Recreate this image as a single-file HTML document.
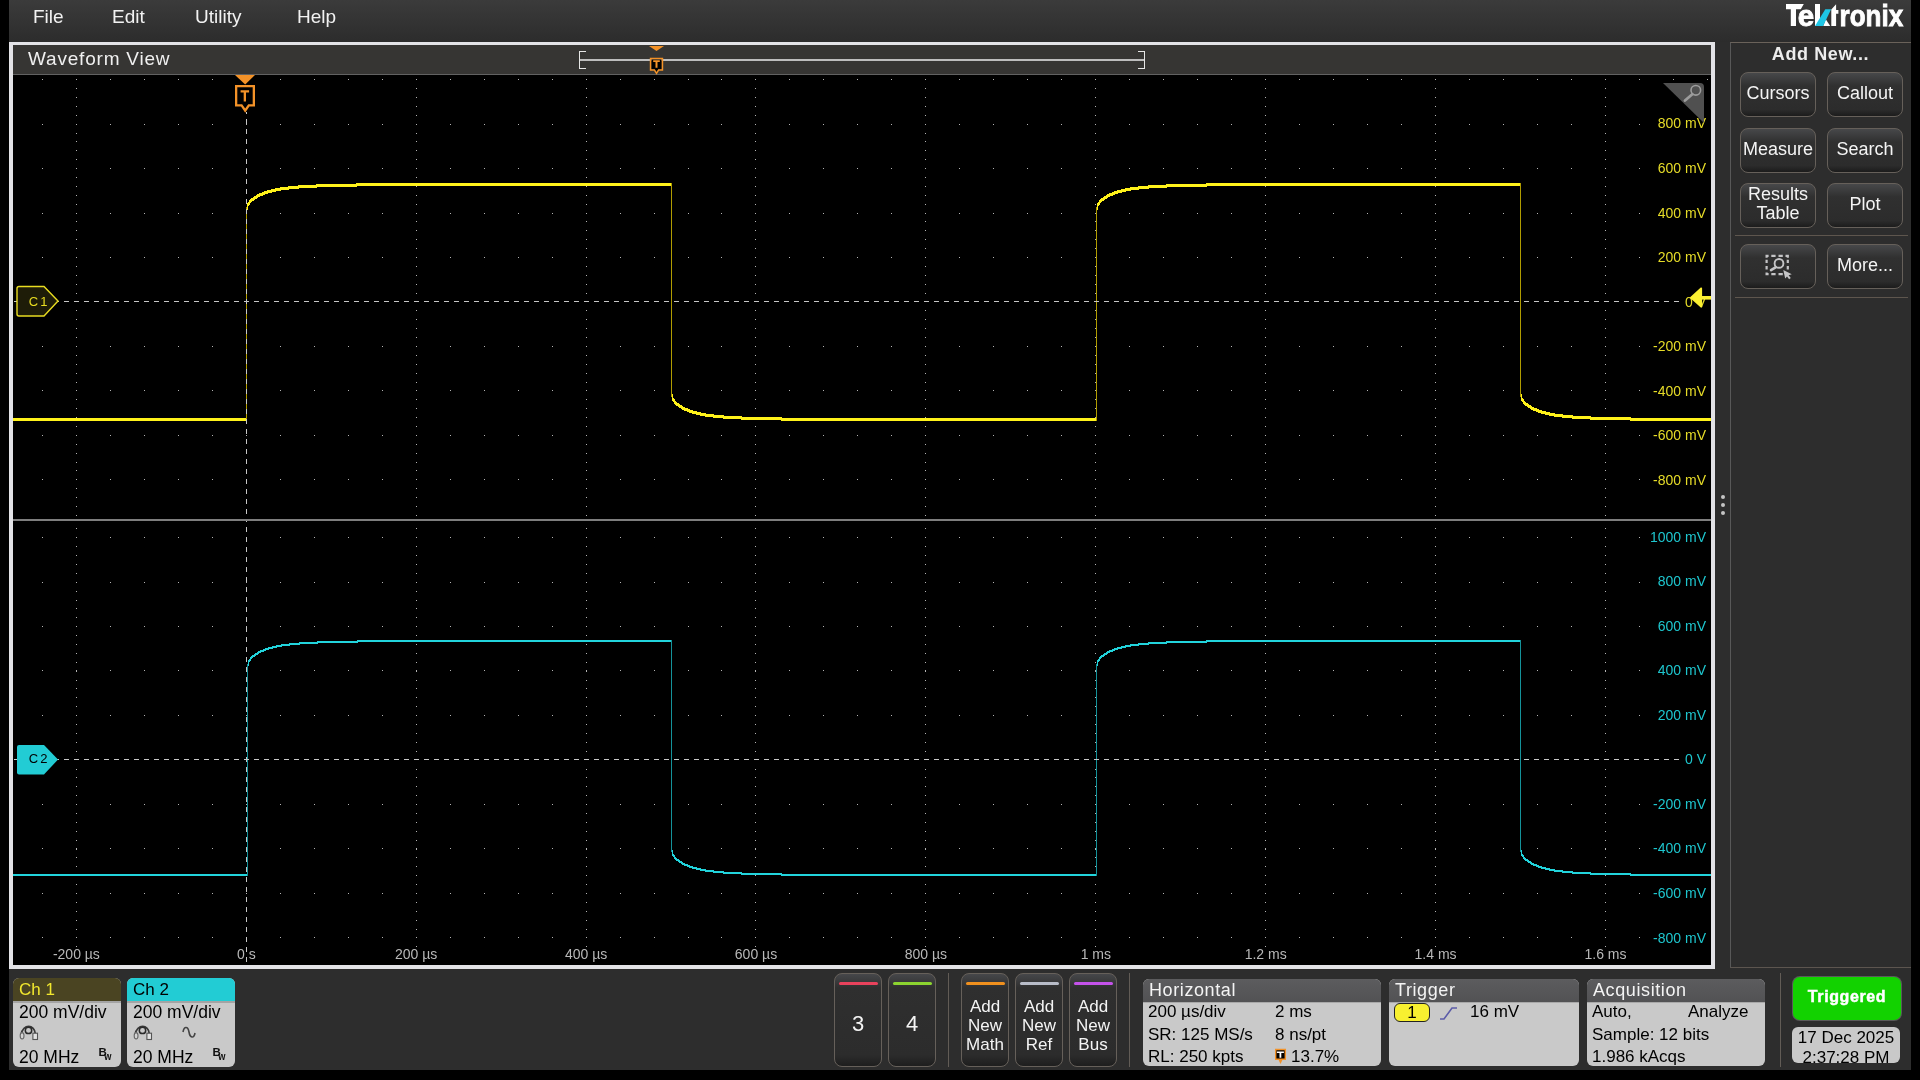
<!DOCTYPE html>
<html><head><meta charset="utf-8">
<style>
*{margin:0;padding:0;box-sizing:border-box}
html,body{width:1920px;height:1080px;overflow:hidden;background:#000;font-family:"Liberation Sans",sans-serif}body{will-change:transform}
.a{position:absolute}
#app{left:9px;top:0;width:1902px;height:1070px;background:#2d2d2d}
#menu{left:9px;top:0;width:1902px;height:42px;background:linear-gradient(#3b3b3b,#2c2c2c)}
.mi{position:absolute;top:6px;font-size:19px;line-height:19px;color:#f2f2f2;white-space:nowrap}
#frame{left:9px;top:42px;width:1706px;height:927px;background:#e3e3e7}
#title{left:13px;top:45px;width:1698px;height:29px;background:#363533}
#tline{left:13px;top:74px;width:1698px;height:1px;background:#626262}
#plot{left:13px;top:75px;width:1698px;height:890px;background:#000}
#sep{left:13px;top:519px;width:1698px;height:2px;background:#7e7e7e}
.vl{position:absolute;right:210px;padding-right:4px;padding-left:2px;background:#000;font-size:14px;line-height:18px;white-space:nowrap;text-align:right}
.c1l{color:#e6dc28}
.c2l{color:#1ec6ce}
.hl{position:absolute;top:947.5px;width:100px;text-align:center;font-size:14px;line-height:12px;color:#b8b8b8;white-space:nowrap}
#rpanel{left:1730px;top:42px;width:181px;height:926px;border-left:1px solid #585858;border-top:1px solid #6a625a;border-bottom:1px solid #5c554f}
.btn{position:absolute;width:76px;height:45px;border:1.5px solid #66605a;border-radius:8px;background:linear-gradient(#47484a,#303030 30%,#2c2c2c 85%,#1c1c1c);color:#f4f4f4;font-size:18px;line-height:19px;text-align:center;display:flex;align-items:center;justify-content:center;padding-bottom:2px}
.hsep{position:absolute;left:1735px;width:173px;height:1px;background:#5e564e}
.vsep{position:absolute;top:973px;width:1px;height:94px;background:#625c56}
.badge{position:absolute;top:978px;width:108px;height:89px;border-radius:6px;overflow:hidden;background:#c9c9c9}
.bh{position:absolute;left:0;top:0;width:100%;height:23px;font-size:17px;line-height:19px;padding-left:6px;padding-top:1.5px}
.bl{position:absolute;left:0;top:23px;width:100%;height:1.5px;background:#a4a4a4}
.bt{position:absolute;left:6px;font-size:17.5px;line-height:19px;color:#000;white-space:nowrap}
.sbtn{position:absolute;top:973px;width:48px;height:94px;border:1.5px solid #66605a;border-radius:8px;background:linear-gradient(#46474a,#2f2f2f 15%,#2c2c2c 88%,#1e1e1e);color:#f4f4f4;text-align:center}
.sbar{position:absolute;left:3.5px;top:7.5px;width:39px;height:3.2px;border-radius:2px}
.box{position:absolute;top:979px;height:87px;border-radius:6px;overflow:hidden;background:#c9c9c9}
.boxh{position:absolute;left:0;top:0;width:100%;height:23px;background:linear-gradient(#5c5c5e,#525254);color:#f4f4f4;font-size:18px;line-height:19px;padding-left:6px;padding-top:1.5px;letter-spacing:0.6px}
.boxl{position:absolute;left:0;top:23px;width:100%;height:1px;background:#a9a9a9}
.bx{position:absolute;font-size:17px;line-height:19px;color:#000;white-space:nowrap}
</style></head><body>
<div id="app" class="a"></div>
<div id="menu" class="a"></div>
<div class="mi" style="left:33px;top:6.5px">File</div>
<div class="mi" style="left:112px;top:6.5px">Edit</div>
<div class="mi" style="left:195px;top:6.5px">Utility</div>
<div class="mi" style="left:297px;top:6.5px">Help</div>
<!-- logo -->
<svg class="a" style="left:1780px;top:0" width="130" height="32" viewBox="1780 0 130 32">
<path d="M1786 4h17.8l-3 5.2h-4.8v16.8h-5.2v-16.8h-4.8z" fill="#fff"/>
<text x="1797.7" y="25.6" font-family="Liberation Sans" font-weight="bold" font-size="30" fill="#fff" stroke="#fff" stroke-width="0.9" textLength="16.4" lengthAdjust="spacingAndGlyphs">e</text>
<path d="M1815 4h5v22h-5z" fill="#fff"/>
<path d="M1823.2 26l2.6-6.8l4.4 6.8z" fill="#fff"/>
<path d="M1825.3 9.2h5.8l-8 16.8h-8.1z" fill="#1ec6e6"/>
<path d="M1831.3 9.6l4.8-5.4v5.8h2.3v3.7h-2.3v12.3h-4.8z" fill="#fff"/>
<text x="1839.6" y="25.6" font-family="Liberation Sans" font-weight="bold" font-size="30" fill="#fff" stroke="#fff" stroke-width="0.9" textLength="63.6" lengthAdjust="spacingAndGlyphs">ronix</text>
</svg>

<div id="frame" class="a"></div>
<div id="title" class="a"></div>
<div id="tline" class="a"></div>
<div id="plot" class="a"></div>
<div id="sep" class="a"></div>
<div class="a" style="left:28px;top:49px;font-size:19px;line-height:19px;color:#f0f0f0;letter-spacing:0.8px">Waveform View</div>

<!-- overview bar -->
<svg class="a" style="left:560px;top:44px" width="600" height="32" viewBox="560 44 600 32">
<path d="M579 51h7v1h-6v16h6v1h-7z" fill="#e6e6e6"/>
<path d="M1145 51h-7v1h6v16h-6v1h7z" fill="#e6e6e6"/>
<rect x="580" y="59" width="564" height="2" fill="#bdbdbd"/>
<path d="M649 46h15l-7.5 5z" fill="#f39228"/>
<path d="M651.3 59.3V69.3H654.8L656.5 72L658.2 69.3H661.7V59.3Z" fill="#000"/><path d="M649.8 57.8H663.2V70.8H659L656.5 74.8L654 70.8H649.8ZM651.3 59.3V69.3H654.8L656.5 72L658.2 69.3H661.7V59.3Z" fill="#f39228" fill-rule="evenodd"/>
<path d="M653.2 60.3h6.6v1.7h-2.3v5.8h-2v-5.8h-2.3z" fill="#f39228"/>
</svg>

<!-- plot svg -->
<svg class="a" style="left:13px;top:75px" width="1698" height="890" viewBox="13 75 1698 890" shape-rendering="crispEdges">
<path d="M42 79h1v1h-1zM76 79h1v1h-1zM110 79h1v1h-1zM144 79h1v1h-1zM178 79h1v1h-1zM212 79h1v1h-1zM246 79h1v1h-1zM280 79h1v1h-1zM314 79h1v1h-1zM348 79h1v1h-1zM382 79h1v1h-1zM416 79h1v1h-1zM450 79h1v1h-1zM484 79h1v1h-1zM518 79h1v1h-1zM552 79h1v1h-1zM586 79h1v1h-1zM620 79h1v1h-1zM654 79h1v1h-1zM688 79h1v1h-1zM721 79h1v1h-1zM755 79h1v1h-1zM789 79h1v1h-1zM823 79h1v1h-1zM857 79h1v1h-1zM891 79h1v1h-1zM925 79h1v1h-1zM959 79h1v1h-1zM993 79h1v1h-1zM1027 79h1v1h-1zM1061 79h1v1h-1zM1095 79h1v1h-1zM1129 79h1v1h-1zM1163 79h1v1h-1zM1197 79h1v1h-1zM1231 79h1v1h-1zM1265 79h1v1h-1zM1299 79h1v1h-1zM1333 79h1v1h-1zM1367 79h1v1h-1zM1401 79h1v1h-1zM1435 79h1v1h-1zM1469 79h1v1h-1zM1503 79h1v1h-1zM1537 79h1v1h-1zM1571 79h1v1h-1zM1605 79h1v1h-1zM1639 79h1v1h-1zM1673 79h1v1h-1zM1707 79h1v1h-1zM42 124h1v1h-1zM76 124h1v1h-1zM110 124h1v1h-1zM144 124h1v1h-1zM178 124h1v1h-1zM212 124h1v1h-1zM246 124h1v1h-1zM280 124h1v1h-1zM314 124h1v1h-1zM348 124h1v1h-1zM382 124h1v1h-1zM416 124h1v1h-1zM450 124h1v1h-1zM484 124h1v1h-1zM518 124h1v1h-1zM552 124h1v1h-1zM586 124h1v1h-1zM620 124h1v1h-1zM654 124h1v1h-1zM688 124h1v1h-1zM721 124h1v1h-1zM755 124h1v1h-1zM789 124h1v1h-1zM823 124h1v1h-1zM857 124h1v1h-1zM891 124h1v1h-1zM925 124h1v1h-1zM959 124h1v1h-1zM993 124h1v1h-1zM1027 124h1v1h-1zM1061 124h1v1h-1zM1095 124h1v1h-1zM1129 124h1v1h-1zM1163 124h1v1h-1zM1197 124h1v1h-1zM1231 124h1v1h-1zM1265 124h1v1h-1zM1299 124h1v1h-1zM1333 124h1v1h-1zM1367 124h1v1h-1zM1401 124h1v1h-1zM1435 124h1v1h-1zM1469 124h1v1h-1zM1503 124h1v1h-1zM1537 124h1v1h-1zM1571 124h1v1h-1zM1605 124h1v1h-1zM1639 124h1v1h-1zM1673 124h1v1h-1zM1707 124h1v1h-1zM42 168h1v1h-1zM76 168h1v1h-1zM110 168h1v1h-1zM144 168h1v1h-1zM178 168h1v1h-1zM212 168h1v1h-1zM246 168h1v1h-1zM280 168h1v1h-1zM314 168h1v1h-1zM348 168h1v1h-1zM382 168h1v1h-1zM416 168h1v1h-1zM450 168h1v1h-1zM484 168h1v1h-1zM518 168h1v1h-1zM552 168h1v1h-1zM586 168h1v1h-1zM620 168h1v1h-1zM654 168h1v1h-1zM688 168h1v1h-1zM721 168h1v1h-1zM755 168h1v1h-1zM789 168h1v1h-1zM823 168h1v1h-1zM857 168h1v1h-1zM891 168h1v1h-1zM925 168h1v1h-1zM959 168h1v1h-1zM993 168h1v1h-1zM1027 168h1v1h-1zM1061 168h1v1h-1zM1095 168h1v1h-1zM1129 168h1v1h-1zM1163 168h1v1h-1zM1197 168h1v1h-1zM1231 168h1v1h-1zM1265 168h1v1h-1zM1299 168h1v1h-1zM1333 168h1v1h-1zM1367 168h1v1h-1zM1401 168h1v1h-1zM1435 168h1v1h-1zM1469 168h1v1h-1zM1503 168h1v1h-1zM1537 168h1v1h-1zM1571 168h1v1h-1zM1605 168h1v1h-1zM1639 168h1v1h-1zM1673 168h1v1h-1zM1707 168h1v1h-1zM42 213h1v1h-1zM76 213h1v1h-1zM110 213h1v1h-1zM144 213h1v1h-1zM178 213h1v1h-1zM212 213h1v1h-1zM246 213h1v1h-1zM280 213h1v1h-1zM314 213h1v1h-1zM348 213h1v1h-1zM382 213h1v1h-1zM416 213h1v1h-1zM450 213h1v1h-1zM484 213h1v1h-1zM518 213h1v1h-1zM552 213h1v1h-1zM586 213h1v1h-1zM620 213h1v1h-1zM654 213h1v1h-1zM688 213h1v1h-1zM721 213h1v1h-1zM755 213h1v1h-1zM789 213h1v1h-1zM823 213h1v1h-1zM857 213h1v1h-1zM891 213h1v1h-1zM925 213h1v1h-1zM959 213h1v1h-1zM993 213h1v1h-1zM1027 213h1v1h-1zM1061 213h1v1h-1zM1095 213h1v1h-1zM1129 213h1v1h-1zM1163 213h1v1h-1zM1197 213h1v1h-1zM1231 213h1v1h-1zM1265 213h1v1h-1zM1299 213h1v1h-1zM1333 213h1v1h-1zM1367 213h1v1h-1zM1401 213h1v1h-1zM1435 213h1v1h-1zM1469 213h1v1h-1zM1503 213h1v1h-1zM1537 213h1v1h-1zM1571 213h1v1h-1zM1605 213h1v1h-1zM1639 213h1v1h-1zM1673 213h1v1h-1zM1707 213h1v1h-1zM42 257h1v1h-1zM76 257h1v1h-1zM110 257h1v1h-1zM144 257h1v1h-1zM178 257h1v1h-1zM212 257h1v1h-1zM246 257h1v1h-1zM280 257h1v1h-1zM314 257h1v1h-1zM348 257h1v1h-1zM382 257h1v1h-1zM416 257h1v1h-1zM450 257h1v1h-1zM484 257h1v1h-1zM518 257h1v1h-1zM552 257h1v1h-1zM586 257h1v1h-1zM620 257h1v1h-1zM654 257h1v1h-1zM688 257h1v1h-1zM721 257h1v1h-1zM755 257h1v1h-1zM789 257h1v1h-1zM823 257h1v1h-1zM857 257h1v1h-1zM891 257h1v1h-1zM925 257h1v1h-1zM959 257h1v1h-1zM993 257h1v1h-1zM1027 257h1v1h-1zM1061 257h1v1h-1zM1095 257h1v1h-1zM1129 257h1v1h-1zM1163 257h1v1h-1zM1197 257h1v1h-1zM1231 257h1v1h-1zM1265 257h1v1h-1zM1299 257h1v1h-1zM1333 257h1v1h-1zM1367 257h1v1h-1zM1401 257h1v1h-1zM1435 257h1v1h-1zM1469 257h1v1h-1zM1503 257h1v1h-1zM1537 257h1v1h-1zM1571 257h1v1h-1zM1605 257h1v1h-1zM1639 257h1v1h-1zM1673 257h1v1h-1zM1707 257h1v1h-1zM42 346h1v1h-1zM76 346h1v1h-1zM110 346h1v1h-1zM144 346h1v1h-1zM178 346h1v1h-1zM212 346h1v1h-1zM246 346h1v1h-1zM280 346h1v1h-1zM314 346h1v1h-1zM348 346h1v1h-1zM382 346h1v1h-1zM416 346h1v1h-1zM450 346h1v1h-1zM484 346h1v1h-1zM518 346h1v1h-1zM552 346h1v1h-1zM586 346h1v1h-1zM620 346h1v1h-1zM654 346h1v1h-1zM688 346h1v1h-1zM721 346h1v1h-1zM755 346h1v1h-1zM789 346h1v1h-1zM823 346h1v1h-1zM857 346h1v1h-1zM891 346h1v1h-1zM925 346h1v1h-1zM959 346h1v1h-1zM993 346h1v1h-1zM1027 346h1v1h-1zM1061 346h1v1h-1zM1095 346h1v1h-1zM1129 346h1v1h-1zM1163 346h1v1h-1zM1197 346h1v1h-1zM1231 346h1v1h-1zM1265 346h1v1h-1zM1299 346h1v1h-1zM1333 346h1v1h-1zM1367 346h1v1h-1zM1401 346h1v1h-1zM1435 346h1v1h-1zM1469 346h1v1h-1zM1503 346h1v1h-1zM1537 346h1v1h-1zM1571 346h1v1h-1zM1605 346h1v1h-1zM1639 346h1v1h-1zM1673 346h1v1h-1zM1707 346h1v1h-1zM42 390h1v1h-1zM76 390h1v1h-1zM110 390h1v1h-1zM144 390h1v1h-1zM178 390h1v1h-1zM212 390h1v1h-1zM246 390h1v1h-1zM280 390h1v1h-1zM314 390h1v1h-1zM348 390h1v1h-1zM382 390h1v1h-1zM416 390h1v1h-1zM450 390h1v1h-1zM484 390h1v1h-1zM518 390h1v1h-1zM552 390h1v1h-1zM586 390h1v1h-1zM620 390h1v1h-1zM654 390h1v1h-1zM688 390h1v1h-1zM721 390h1v1h-1zM755 390h1v1h-1zM789 390h1v1h-1zM823 390h1v1h-1zM857 390h1v1h-1zM891 390h1v1h-1zM925 390h1v1h-1zM959 390h1v1h-1zM993 390h1v1h-1zM1027 390h1v1h-1zM1061 390h1v1h-1zM1095 390h1v1h-1zM1129 390h1v1h-1zM1163 390h1v1h-1zM1197 390h1v1h-1zM1231 390h1v1h-1zM1265 390h1v1h-1zM1299 390h1v1h-1zM1333 390h1v1h-1zM1367 390h1v1h-1zM1401 390h1v1h-1zM1435 390h1v1h-1zM1469 390h1v1h-1zM1503 390h1v1h-1zM1537 390h1v1h-1zM1571 390h1v1h-1zM1605 390h1v1h-1zM1639 390h1v1h-1zM1673 390h1v1h-1zM1707 390h1v1h-1zM42 435h1v1h-1zM76 435h1v1h-1zM110 435h1v1h-1zM144 435h1v1h-1zM178 435h1v1h-1zM212 435h1v1h-1zM246 435h1v1h-1zM280 435h1v1h-1zM314 435h1v1h-1zM348 435h1v1h-1zM382 435h1v1h-1zM416 435h1v1h-1zM450 435h1v1h-1zM484 435h1v1h-1zM518 435h1v1h-1zM552 435h1v1h-1zM586 435h1v1h-1zM620 435h1v1h-1zM654 435h1v1h-1zM688 435h1v1h-1zM721 435h1v1h-1zM755 435h1v1h-1zM789 435h1v1h-1zM823 435h1v1h-1zM857 435h1v1h-1zM891 435h1v1h-1zM925 435h1v1h-1zM959 435h1v1h-1zM993 435h1v1h-1zM1027 435h1v1h-1zM1061 435h1v1h-1zM1095 435h1v1h-1zM1129 435h1v1h-1zM1163 435h1v1h-1zM1197 435h1v1h-1zM1231 435h1v1h-1zM1265 435h1v1h-1zM1299 435h1v1h-1zM1333 435h1v1h-1zM1367 435h1v1h-1zM1401 435h1v1h-1zM1435 435h1v1h-1zM1469 435h1v1h-1zM1503 435h1v1h-1zM1537 435h1v1h-1zM1571 435h1v1h-1zM1605 435h1v1h-1zM1639 435h1v1h-1zM1673 435h1v1h-1zM1707 435h1v1h-1zM42 479h1v1h-1zM76 479h1v1h-1zM110 479h1v1h-1zM144 479h1v1h-1zM178 479h1v1h-1zM212 479h1v1h-1zM246 479h1v1h-1zM280 479h1v1h-1zM314 479h1v1h-1zM348 479h1v1h-1zM382 479h1v1h-1zM416 479h1v1h-1zM450 479h1v1h-1zM484 479h1v1h-1zM518 479h1v1h-1zM552 479h1v1h-1zM586 479h1v1h-1zM620 479h1v1h-1zM654 479h1v1h-1zM688 479h1v1h-1zM721 479h1v1h-1zM755 479h1v1h-1zM789 479h1v1h-1zM823 479h1v1h-1zM857 479h1v1h-1zM891 479h1v1h-1zM925 479h1v1h-1zM959 479h1v1h-1zM993 479h1v1h-1zM1027 479h1v1h-1zM1061 479h1v1h-1zM1095 479h1v1h-1zM1129 479h1v1h-1zM1163 479h1v1h-1zM1197 479h1v1h-1zM1231 479h1v1h-1zM1265 479h1v1h-1zM1299 479h1v1h-1zM1333 479h1v1h-1zM1367 479h1v1h-1zM1401 479h1v1h-1zM1435 479h1v1h-1zM1469 479h1v1h-1zM1503 479h1v1h-1zM1537 479h1v1h-1zM1571 479h1v1h-1zM1605 479h1v1h-1zM1639 479h1v1h-1zM1673 479h1v1h-1zM1707 479h1v1h-1zM76 79h1v1h-1zM76 88h1v1h-1zM76 97h1v1h-1zM76 106h1v1h-1zM76 115h1v1h-1zM76 124h1v1h-1zM76 133h1v1h-1zM76 141h1v1h-1zM76 150h1v1h-1zM76 159h1v1h-1zM76 168h1v1h-1zM76 177h1v1h-1zM76 186h1v1h-1zM76 195h1v1h-1zM76 204h1v1h-1zM76 213h1v1h-1zM76 221h1v1h-1zM76 230h1v1h-1zM76 239h1v1h-1zM76 248h1v1h-1zM76 257h1v1h-1zM76 266h1v1h-1zM76 275h1v1h-1zM76 284h1v1h-1zM76 293h1v1h-1zM76 310h1v1h-1zM76 319h1v1h-1zM76 328h1v1h-1zM76 337h1v1h-1zM76 346h1v1h-1zM76 355h1v1h-1zM76 364h1v1h-1zM76 373h1v1h-1zM76 382h1v1h-1zM76 390h1v1h-1zM76 399h1v1h-1zM76 408h1v1h-1zM76 417h1v1h-1zM76 426h1v1h-1zM76 435h1v1h-1zM76 444h1v1h-1zM76 453h1v1h-1zM76 462h1v1h-1zM76 470h1v1h-1zM76 479h1v1h-1zM76 488h1v1h-1zM76 497h1v1h-1zM76 506h1v1h-1zM76 515h1v1h-1zM416 79h1v1h-1zM416 88h1v1h-1zM416 97h1v1h-1zM416 106h1v1h-1zM416 115h1v1h-1zM416 124h1v1h-1zM416 133h1v1h-1zM416 141h1v1h-1zM416 150h1v1h-1zM416 159h1v1h-1zM416 168h1v1h-1zM416 177h1v1h-1zM416 186h1v1h-1zM416 195h1v1h-1zM416 204h1v1h-1zM416 213h1v1h-1zM416 221h1v1h-1zM416 230h1v1h-1zM416 239h1v1h-1zM416 248h1v1h-1zM416 257h1v1h-1zM416 266h1v1h-1zM416 275h1v1h-1zM416 284h1v1h-1zM416 293h1v1h-1zM416 310h1v1h-1zM416 319h1v1h-1zM416 328h1v1h-1zM416 337h1v1h-1zM416 346h1v1h-1zM416 355h1v1h-1zM416 364h1v1h-1zM416 373h1v1h-1zM416 382h1v1h-1zM416 390h1v1h-1zM416 399h1v1h-1zM416 408h1v1h-1zM416 417h1v1h-1zM416 426h1v1h-1zM416 435h1v1h-1zM416 444h1v1h-1zM416 453h1v1h-1zM416 462h1v1h-1zM416 470h1v1h-1zM416 479h1v1h-1zM416 488h1v1h-1zM416 497h1v1h-1zM416 506h1v1h-1zM416 515h1v1h-1zM586 79h1v1h-1zM586 88h1v1h-1zM586 97h1v1h-1zM586 106h1v1h-1zM586 115h1v1h-1zM586 124h1v1h-1zM586 133h1v1h-1zM586 141h1v1h-1zM586 150h1v1h-1zM586 159h1v1h-1zM586 168h1v1h-1zM586 177h1v1h-1zM586 186h1v1h-1zM586 195h1v1h-1zM586 204h1v1h-1zM586 213h1v1h-1zM586 221h1v1h-1zM586 230h1v1h-1zM586 239h1v1h-1zM586 248h1v1h-1zM586 257h1v1h-1zM586 266h1v1h-1zM586 275h1v1h-1zM586 284h1v1h-1zM586 293h1v1h-1zM586 310h1v1h-1zM586 319h1v1h-1zM586 328h1v1h-1zM586 337h1v1h-1zM586 346h1v1h-1zM586 355h1v1h-1zM586 364h1v1h-1zM586 373h1v1h-1zM586 382h1v1h-1zM586 390h1v1h-1zM586 399h1v1h-1zM586 408h1v1h-1zM586 417h1v1h-1zM586 426h1v1h-1zM586 435h1v1h-1zM586 444h1v1h-1zM586 453h1v1h-1zM586 462h1v1h-1zM586 470h1v1h-1zM586 479h1v1h-1zM586 488h1v1h-1zM586 497h1v1h-1zM586 506h1v1h-1zM586 515h1v1h-1zM755 79h1v1h-1zM755 88h1v1h-1zM755 97h1v1h-1zM755 106h1v1h-1zM755 115h1v1h-1zM755 124h1v1h-1zM755 133h1v1h-1zM755 141h1v1h-1zM755 150h1v1h-1zM755 159h1v1h-1zM755 168h1v1h-1zM755 177h1v1h-1zM755 186h1v1h-1zM755 195h1v1h-1zM755 204h1v1h-1zM755 213h1v1h-1zM755 221h1v1h-1zM755 230h1v1h-1zM755 239h1v1h-1zM755 248h1v1h-1zM755 257h1v1h-1zM755 266h1v1h-1zM755 275h1v1h-1zM755 284h1v1h-1zM755 293h1v1h-1zM755 310h1v1h-1zM755 319h1v1h-1zM755 328h1v1h-1zM755 337h1v1h-1zM755 346h1v1h-1zM755 355h1v1h-1zM755 364h1v1h-1zM755 373h1v1h-1zM755 382h1v1h-1zM755 390h1v1h-1zM755 399h1v1h-1zM755 408h1v1h-1zM755 417h1v1h-1zM755 426h1v1h-1zM755 435h1v1h-1zM755 444h1v1h-1zM755 453h1v1h-1zM755 462h1v1h-1zM755 470h1v1h-1zM755 479h1v1h-1zM755 488h1v1h-1zM755 497h1v1h-1zM755 506h1v1h-1zM755 515h1v1h-1zM925 79h1v1h-1zM925 88h1v1h-1zM925 97h1v1h-1zM925 106h1v1h-1zM925 115h1v1h-1zM925 124h1v1h-1zM925 133h1v1h-1zM925 141h1v1h-1zM925 150h1v1h-1zM925 159h1v1h-1zM925 168h1v1h-1zM925 177h1v1h-1zM925 186h1v1h-1zM925 195h1v1h-1zM925 204h1v1h-1zM925 213h1v1h-1zM925 221h1v1h-1zM925 230h1v1h-1zM925 239h1v1h-1zM925 248h1v1h-1zM925 257h1v1h-1zM925 266h1v1h-1zM925 275h1v1h-1zM925 284h1v1h-1zM925 293h1v1h-1zM925 310h1v1h-1zM925 319h1v1h-1zM925 328h1v1h-1zM925 337h1v1h-1zM925 346h1v1h-1zM925 355h1v1h-1zM925 364h1v1h-1zM925 373h1v1h-1zM925 382h1v1h-1zM925 390h1v1h-1zM925 399h1v1h-1zM925 408h1v1h-1zM925 417h1v1h-1zM925 426h1v1h-1zM925 435h1v1h-1zM925 444h1v1h-1zM925 453h1v1h-1zM925 462h1v1h-1zM925 470h1v1h-1zM925 479h1v1h-1zM925 488h1v1h-1zM925 497h1v1h-1zM925 506h1v1h-1zM925 515h1v1h-1zM1095 79h1v1h-1zM1095 88h1v1h-1zM1095 97h1v1h-1zM1095 106h1v1h-1zM1095 115h1v1h-1zM1095 124h1v1h-1zM1095 133h1v1h-1zM1095 141h1v1h-1zM1095 150h1v1h-1zM1095 159h1v1h-1zM1095 168h1v1h-1zM1095 177h1v1h-1zM1095 186h1v1h-1zM1095 195h1v1h-1zM1095 204h1v1h-1zM1095 213h1v1h-1zM1095 221h1v1h-1zM1095 230h1v1h-1zM1095 239h1v1h-1zM1095 248h1v1h-1zM1095 257h1v1h-1zM1095 266h1v1h-1zM1095 275h1v1h-1zM1095 284h1v1h-1zM1095 293h1v1h-1zM1095 310h1v1h-1zM1095 319h1v1h-1zM1095 328h1v1h-1zM1095 337h1v1h-1zM1095 346h1v1h-1zM1095 355h1v1h-1zM1095 364h1v1h-1zM1095 373h1v1h-1zM1095 382h1v1h-1zM1095 390h1v1h-1zM1095 399h1v1h-1zM1095 408h1v1h-1zM1095 417h1v1h-1zM1095 426h1v1h-1zM1095 435h1v1h-1zM1095 444h1v1h-1zM1095 453h1v1h-1zM1095 462h1v1h-1zM1095 470h1v1h-1zM1095 479h1v1h-1zM1095 488h1v1h-1zM1095 497h1v1h-1zM1095 506h1v1h-1zM1095 515h1v1h-1zM1265 79h1v1h-1zM1265 88h1v1h-1zM1265 97h1v1h-1zM1265 106h1v1h-1zM1265 115h1v1h-1zM1265 124h1v1h-1zM1265 133h1v1h-1zM1265 141h1v1h-1zM1265 150h1v1h-1zM1265 159h1v1h-1zM1265 168h1v1h-1zM1265 177h1v1h-1zM1265 186h1v1h-1zM1265 195h1v1h-1zM1265 204h1v1h-1zM1265 213h1v1h-1zM1265 221h1v1h-1zM1265 230h1v1h-1zM1265 239h1v1h-1zM1265 248h1v1h-1zM1265 257h1v1h-1zM1265 266h1v1h-1zM1265 275h1v1h-1zM1265 284h1v1h-1zM1265 293h1v1h-1zM1265 310h1v1h-1zM1265 319h1v1h-1zM1265 328h1v1h-1zM1265 337h1v1h-1zM1265 346h1v1h-1zM1265 355h1v1h-1zM1265 364h1v1h-1zM1265 373h1v1h-1zM1265 382h1v1h-1zM1265 390h1v1h-1zM1265 399h1v1h-1zM1265 408h1v1h-1zM1265 417h1v1h-1zM1265 426h1v1h-1zM1265 435h1v1h-1zM1265 444h1v1h-1zM1265 453h1v1h-1zM1265 462h1v1h-1zM1265 470h1v1h-1zM1265 479h1v1h-1zM1265 488h1v1h-1zM1265 497h1v1h-1zM1265 506h1v1h-1zM1265 515h1v1h-1zM1435 79h1v1h-1zM1435 88h1v1h-1zM1435 97h1v1h-1zM1435 106h1v1h-1zM1435 115h1v1h-1zM1435 124h1v1h-1zM1435 133h1v1h-1zM1435 141h1v1h-1zM1435 150h1v1h-1zM1435 159h1v1h-1zM1435 168h1v1h-1zM1435 177h1v1h-1zM1435 186h1v1h-1zM1435 195h1v1h-1zM1435 204h1v1h-1zM1435 213h1v1h-1zM1435 221h1v1h-1zM1435 230h1v1h-1zM1435 239h1v1h-1zM1435 248h1v1h-1zM1435 257h1v1h-1zM1435 266h1v1h-1zM1435 275h1v1h-1zM1435 284h1v1h-1zM1435 293h1v1h-1zM1435 310h1v1h-1zM1435 319h1v1h-1zM1435 328h1v1h-1zM1435 337h1v1h-1zM1435 346h1v1h-1zM1435 355h1v1h-1zM1435 364h1v1h-1zM1435 373h1v1h-1zM1435 382h1v1h-1zM1435 390h1v1h-1zM1435 399h1v1h-1zM1435 408h1v1h-1zM1435 417h1v1h-1zM1435 426h1v1h-1zM1435 435h1v1h-1zM1435 444h1v1h-1zM1435 453h1v1h-1zM1435 462h1v1h-1zM1435 470h1v1h-1zM1435 479h1v1h-1zM1435 488h1v1h-1zM1435 497h1v1h-1zM1435 506h1v1h-1zM1435 515h1v1h-1zM1605 79h1v1h-1zM1605 88h1v1h-1zM1605 97h1v1h-1zM1605 106h1v1h-1zM1605 115h1v1h-1zM1605 124h1v1h-1zM1605 133h1v1h-1zM1605 141h1v1h-1zM1605 150h1v1h-1zM1605 159h1v1h-1zM1605 168h1v1h-1zM1605 177h1v1h-1zM1605 186h1v1h-1zM1605 195h1v1h-1zM1605 204h1v1h-1zM1605 213h1v1h-1zM1605 221h1v1h-1zM1605 230h1v1h-1zM1605 239h1v1h-1zM1605 248h1v1h-1zM1605 257h1v1h-1zM1605 266h1v1h-1zM1605 275h1v1h-1zM1605 284h1v1h-1zM1605 293h1v1h-1zM1605 310h1v1h-1zM1605 319h1v1h-1zM1605 328h1v1h-1zM1605 337h1v1h-1zM1605 346h1v1h-1zM1605 355h1v1h-1zM1605 364h1v1h-1zM1605 373h1v1h-1zM1605 382h1v1h-1zM1605 390h1v1h-1zM1605 399h1v1h-1zM1605 408h1v1h-1zM1605 417h1v1h-1zM1605 426h1v1h-1zM1605 435h1v1h-1zM1605 444h1v1h-1zM1605 453h1v1h-1zM1605 462h1v1h-1zM1605 470h1v1h-1zM1605 479h1v1h-1zM1605 488h1v1h-1zM1605 497h1v1h-1zM1605 506h1v1h-1zM1605 515h1v1h-1zM42 537h1v1h-1zM76 537h1v1h-1zM110 537h1v1h-1zM144 537h1v1h-1zM178 537h1v1h-1zM212 537h1v1h-1zM246 537h1v1h-1zM280 537h1v1h-1zM314 537h1v1h-1zM348 537h1v1h-1zM382 537h1v1h-1zM416 537h1v1h-1zM450 537h1v1h-1zM484 537h1v1h-1zM518 537h1v1h-1zM552 537h1v1h-1zM586 537h1v1h-1zM620 537h1v1h-1zM654 537h1v1h-1zM688 537h1v1h-1zM721 537h1v1h-1zM755 537h1v1h-1zM789 537h1v1h-1zM823 537h1v1h-1zM857 537h1v1h-1zM891 537h1v1h-1zM925 537h1v1h-1zM959 537h1v1h-1zM993 537h1v1h-1zM1027 537h1v1h-1zM1061 537h1v1h-1zM1095 537h1v1h-1zM1129 537h1v1h-1zM1163 537h1v1h-1zM1197 537h1v1h-1zM1231 537h1v1h-1zM1265 537h1v1h-1zM1299 537h1v1h-1zM1333 537h1v1h-1zM1367 537h1v1h-1zM1401 537h1v1h-1zM1435 537h1v1h-1zM1469 537h1v1h-1zM1503 537h1v1h-1zM1537 537h1v1h-1zM1571 537h1v1h-1zM1605 537h1v1h-1zM1639 537h1v1h-1zM1673 537h1v1h-1zM1707 537h1v1h-1zM42 582h1v1h-1zM76 582h1v1h-1zM110 582h1v1h-1zM144 582h1v1h-1zM178 582h1v1h-1zM212 582h1v1h-1zM246 582h1v1h-1zM280 582h1v1h-1zM314 582h1v1h-1zM348 582h1v1h-1zM382 582h1v1h-1zM416 582h1v1h-1zM450 582h1v1h-1zM484 582h1v1h-1zM518 582h1v1h-1zM552 582h1v1h-1zM586 582h1v1h-1zM620 582h1v1h-1zM654 582h1v1h-1zM688 582h1v1h-1zM721 582h1v1h-1zM755 582h1v1h-1zM789 582h1v1h-1zM823 582h1v1h-1zM857 582h1v1h-1zM891 582h1v1h-1zM925 582h1v1h-1zM959 582h1v1h-1zM993 582h1v1h-1zM1027 582h1v1h-1zM1061 582h1v1h-1zM1095 582h1v1h-1zM1129 582h1v1h-1zM1163 582h1v1h-1zM1197 582h1v1h-1zM1231 582h1v1h-1zM1265 582h1v1h-1zM1299 582h1v1h-1zM1333 582h1v1h-1zM1367 582h1v1h-1zM1401 582h1v1h-1zM1435 582h1v1h-1zM1469 582h1v1h-1zM1503 582h1v1h-1zM1537 582h1v1h-1zM1571 582h1v1h-1zM1605 582h1v1h-1zM1639 582h1v1h-1zM1673 582h1v1h-1zM1707 582h1v1h-1zM42 626h1v1h-1zM76 626h1v1h-1zM110 626h1v1h-1zM144 626h1v1h-1zM178 626h1v1h-1zM212 626h1v1h-1zM246 626h1v1h-1zM280 626h1v1h-1zM314 626h1v1h-1zM348 626h1v1h-1zM382 626h1v1h-1zM416 626h1v1h-1zM450 626h1v1h-1zM484 626h1v1h-1zM518 626h1v1h-1zM552 626h1v1h-1zM586 626h1v1h-1zM620 626h1v1h-1zM654 626h1v1h-1zM688 626h1v1h-1zM721 626h1v1h-1zM755 626h1v1h-1zM789 626h1v1h-1zM823 626h1v1h-1zM857 626h1v1h-1zM891 626h1v1h-1zM925 626h1v1h-1zM959 626h1v1h-1zM993 626h1v1h-1zM1027 626h1v1h-1zM1061 626h1v1h-1zM1095 626h1v1h-1zM1129 626h1v1h-1zM1163 626h1v1h-1zM1197 626h1v1h-1zM1231 626h1v1h-1zM1265 626h1v1h-1zM1299 626h1v1h-1zM1333 626h1v1h-1zM1367 626h1v1h-1zM1401 626h1v1h-1zM1435 626h1v1h-1zM1469 626h1v1h-1zM1503 626h1v1h-1zM1537 626h1v1h-1zM1571 626h1v1h-1zM1605 626h1v1h-1zM1639 626h1v1h-1zM1673 626h1v1h-1zM1707 626h1v1h-1zM42 670h1v1h-1zM76 670h1v1h-1zM110 670h1v1h-1zM144 670h1v1h-1zM178 670h1v1h-1zM212 670h1v1h-1zM246 670h1v1h-1zM280 670h1v1h-1zM314 670h1v1h-1zM348 670h1v1h-1zM382 670h1v1h-1zM416 670h1v1h-1zM450 670h1v1h-1zM484 670h1v1h-1zM518 670h1v1h-1zM552 670h1v1h-1zM586 670h1v1h-1zM620 670h1v1h-1zM654 670h1v1h-1zM688 670h1v1h-1zM721 670h1v1h-1zM755 670h1v1h-1zM789 670h1v1h-1zM823 670h1v1h-1zM857 670h1v1h-1zM891 670h1v1h-1zM925 670h1v1h-1zM959 670h1v1h-1zM993 670h1v1h-1zM1027 670h1v1h-1zM1061 670h1v1h-1zM1095 670h1v1h-1zM1129 670h1v1h-1zM1163 670h1v1h-1zM1197 670h1v1h-1zM1231 670h1v1h-1zM1265 670h1v1h-1zM1299 670h1v1h-1zM1333 670h1v1h-1zM1367 670h1v1h-1zM1401 670h1v1h-1zM1435 670h1v1h-1zM1469 670h1v1h-1zM1503 670h1v1h-1zM1537 670h1v1h-1zM1571 670h1v1h-1zM1605 670h1v1h-1zM1639 670h1v1h-1zM1673 670h1v1h-1zM1707 670h1v1h-1zM42 715h1v1h-1zM76 715h1v1h-1zM110 715h1v1h-1zM144 715h1v1h-1zM178 715h1v1h-1zM212 715h1v1h-1zM246 715h1v1h-1zM280 715h1v1h-1zM314 715h1v1h-1zM348 715h1v1h-1zM382 715h1v1h-1zM416 715h1v1h-1zM450 715h1v1h-1zM484 715h1v1h-1zM518 715h1v1h-1zM552 715h1v1h-1zM586 715h1v1h-1zM620 715h1v1h-1zM654 715h1v1h-1zM688 715h1v1h-1zM721 715h1v1h-1zM755 715h1v1h-1zM789 715h1v1h-1zM823 715h1v1h-1zM857 715h1v1h-1zM891 715h1v1h-1zM925 715h1v1h-1zM959 715h1v1h-1zM993 715h1v1h-1zM1027 715h1v1h-1zM1061 715h1v1h-1zM1095 715h1v1h-1zM1129 715h1v1h-1zM1163 715h1v1h-1zM1197 715h1v1h-1zM1231 715h1v1h-1zM1265 715h1v1h-1zM1299 715h1v1h-1zM1333 715h1v1h-1zM1367 715h1v1h-1zM1401 715h1v1h-1zM1435 715h1v1h-1zM1469 715h1v1h-1zM1503 715h1v1h-1zM1537 715h1v1h-1zM1571 715h1v1h-1zM1605 715h1v1h-1zM1639 715h1v1h-1zM1673 715h1v1h-1zM1707 715h1v1h-1zM42 804h1v1h-1zM76 804h1v1h-1zM110 804h1v1h-1zM144 804h1v1h-1zM178 804h1v1h-1zM212 804h1v1h-1zM246 804h1v1h-1zM280 804h1v1h-1zM314 804h1v1h-1zM348 804h1v1h-1zM382 804h1v1h-1zM416 804h1v1h-1zM450 804h1v1h-1zM484 804h1v1h-1zM518 804h1v1h-1zM552 804h1v1h-1zM586 804h1v1h-1zM620 804h1v1h-1zM654 804h1v1h-1zM688 804h1v1h-1zM721 804h1v1h-1zM755 804h1v1h-1zM789 804h1v1h-1zM823 804h1v1h-1zM857 804h1v1h-1zM891 804h1v1h-1zM925 804h1v1h-1zM959 804h1v1h-1zM993 804h1v1h-1zM1027 804h1v1h-1zM1061 804h1v1h-1zM1095 804h1v1h-1zM1129 804h1v1h-1zM1163 804h1v1h-1zM1197 804h1v1h-1zM1231 804h1v1h-1zM1265 804h1v1h-1zM1299 804h1v1h-1zM1333 804h1v1h-1zM1367 804h1v1h-1zM1401 804h1v1h-1zM1435 804h1v1h-1zM1469 804h1v1h-1zM1503 804h1v1h-1zM1537 804h1v1h-1zM1571 804h1v1h-1zM1605 804h1v1h-1zM1639 804h1v1h-1zM1673 804h1v1h-1zM1707 804h1v1h-1zM42 848h1v1h-1zM76 848h1v1h-1zM110 848h1v1h-1zM144 848h1v1h-1zM178 848h1v1h-1zM212 848h1v1h-1zM246 848h1v1h-1zM280 848h1v1h-1zM314 848h1v1h-1zM348 848h1v1h-1zM382 848h1v1h-1zM416 848h1v1h-1zM450 848h1v1h-1zM484 848h1v1h-1zM518 848h1v1h-1zM552 848h1v1h-1zM586 848h1v1h-1zM620 848h1v1h-1zM654 848h1v1h-1zM688 848h1v1h-1zM721 848h1v1h-1zM755 848h1v1h-1zM789 848h1v1h-1zM823 848h1v1h-1zM857 848h1v1h-1zM891 848h1v1h-1zM925 848h1v1h-1zM959 848h1v1h-1zM993 848h1v1h-1zM1027 848h1v1h-1zM1061 848h1v1h-1zM1095 848h1v1h-1zM1129 848h1v1h-1zM1163 848h1v1h-1zM1197 848h1v1h-1zM1231 848h1v1h-1zM1265 848h1v1h-1zM1299 848h1v1h-1zM1333 848h1v1h-1zM1367 848h1v1h-1zM1401 848h1v1h-1zM1435 848h1v1h-1zM1469 848h1v1h-1zM1503 848h1v1h-1zM1537 848h1v1h-1zM1571 848h1v1h-1zM1605 848h1v1h-1zM1639 848h1v1h-1zM1673 848h1v1h-1zM1707 848h1v1h-1zM42 893h1v1h-1zM76 893h1v1h-1zM110 893h1v1h-1zM144 893h1v1h-1zM178 893h1v1h-1zM212 893h1v1h-1zM246 893h1v1h-1zM280 893h1v1h-1zM314 893h1v1h-1zM348 893h1v1h-1zM382 893h1v1h-1zM416 893h1v1h-1zM450 893h1v1h-1zM484 893h1v1h-1zM518 893h1v1h-1zM552 893h1v1h-1zM586 893h1v1h-1zM620 893h1v1h-1zM654 893h1v1h-1zM688 893h1v1h-1zM721 893h1v1h-1zM755 893h1v1h-1zM789 893h1v1h-1zM823 893h1v1h-1zM857 893h1v1h-1zM891 893h1v1h-1zM925 893h1v1h-1zM959 893h1v1h-1zM993 893h1v1h-1zM1027 893h1v1h-1zM1061 893h1v1h-1zM1095 893h1v1h-1zM1129 893h1v1h-1zM1163 893h1v1h-1zM1197 893h1v1h-1zM1231 893h1v1h-1zM1265 893h1v1h-1zM1299 893h1v1h-1zM1333 893h1v1h-1zM1367 893h1v1h-1zM1401 893h1v1h-1zM1435 893h1v1h-1zM1469 893h1v1h-1zM1503 893h1v1h-1zM1537 893h1v1h-1zM1571 893h1v1h-1zM1605 893h1v1h-1zM1639 893h1v1h-1zM1673 893h1v1h-1zM1707 893h1v1h-1zM42 937h1v1h-1zM76 937h1v1h-1zM110 937h1v1h-1zM144 937h1v1h-1zM178 937h1v1h-1zM212 937h1v1h-1zM246 937h1v1h-1zM280 937h1v1h-1zM314 937h1v1h-1zM348 937h1v1h-1zM382 937h1v1h-1zM416 937h1v1h-1zM450 937h1v1h-1zM484 937h1v1h-1zM518 937h1v1h-1zM552 937h1v1h-1zM586 937h1v1h-1zM620 937h1v1h-1zM654 937h1v1h-1zM688 937h1v1h-1zM721 937h1v1h-1zM755 937h1v1h-1zM789 937h1v1h-1zM823 937h1v1h-1zM857 937h1v1h-1zM891 937h1v1h-1zM925 937h1v1h-1zM959 937h1v1h-1zM993 937h1v1h-1zM1027 937h1v1h-1zM1061 937h1v1h-1zM1095 937h1v1h-1zM1129 937h1v1h-1zM1163 937h1v1h-1zM1197 937h1v1h-1zM1231 937h1v1h-1zM1265 937h1v1h-1zM1299 937h1v1h-1zM1333 937h1v1h-1zM1367 937h1v1h-1zM1401 937h1v1h-1zM1435 937h1v1h-1zM1469 937h1v1h-1zM1503 937h1v1h-1zM1537 937h1v1h-1zM1571 937h1v1h-1zM1605 937h1v1h-1zM1639 937h1v1h-1zM1673 937h1v1h-1zM1707 937h1v1h-1zM76 528h1v1h-1zM76 537h1v1h-1zM76 546h1v1h-1zM76 555h1v1h-1zM76 564h1v1h-1zM76 573h1v1h-1zM76 582h1v1h-1zM76 591h1v1h-1zM76 600h1v1h-1zM76 608h1v1h-1zM76 617h1v1h-1zM76 626h1v1h-1zM76 635h1v1h-1zM76 644h1v1h-1zM76 653h1v1h-1zM76 662h1v1h-1zM76 671h1v1h-1zM76 680h1v1h-1zM76 688h1v1h-1zM76 697h1v1h-1zM76 706h1v1h-1zM76 715h1v1h-1zM76 724h1v1h-1zM76 733h1v1h-1zM76 742h1v1h-1zM76 751h1v1h-1zM76 769h1v1h-1zM76 777h1v1h-1zM76 786h1v1h-1zM76 795h1v1h-1zM76 804h1v1h-1zM76 813h1v1h-1zM76 822h1v1h-1zM76 831h1v1h-1zM76 840h1v1h-1zM76 849h1v1h-1zM76 857h1v1h-1zM76 866h1v1h-1zM76 875h1v1h-1zM76 884h1v1h-1zM76 893h1v1h-1zM76 902h1v1h-1zM76 911h1v1h-1zM76 920h1v1h-1zM76 929h1v1h-1zM76 937h1v1h-1zM76 946h1v1h-1zM416 528h1v1h-1zM416 537h1v1h-1zM416 546h1v1h-1zM416 555h1v1h-1zM416 564h1v1h-1zM416 573h1v1h-1zM416 582h1v1h-1zM416 591h1v1h-1zM416 600h1v1h-1zM416 608h1v1h-1zM416 617h1v1h-1zM416 626h1v1h-1zM416 635h1v1h-1zM416 644h1v1h-1zM416 653h1v1h-1zM416 662h1v1h-1zM416 671h1v1h-1zM416 680h1v1h-1zM416 688h1v1h-1zM416 697h1v1h-1zM416 706h1v1h-1zM416 715h1v1h-1zM416 724h1v1h-1zM416 733h1v1h-1zM416 742h1v1h-1zM416 751h1v1h-1zM416 769h1v1h-1zM416 777h1v1h-1zM416 786h1v1h-1zM416 795h1v1h-1zM416 804h1v1h-1zM416 813h1v1h-1zM416 822h1v1h-1zM416 831h1v1h-1zM416 840h1v1h-1zM416 849h1v1h-1zM416 857h1v1h-1zM416 866h1v1h-1zM416 875h1v1h-1zM416 884h1v1h-1zM416 893h1v1h-1zM416 902h1v1h-1zM416 911h1v1h-1zM416 920h1v1h-1zM416 929h1v1h-1zM416 937h1v1h-1zM416 946h1v1h-1zM586 528h1v1h-1zM586 537h1v1h-1zM586 546h1v1h-1zM586 555h1v1h-1zM586 564h1v1h-1zM586 573h1v1h-1zM586 582h1v1h-1zM586 591h1v1h-1zM586 600h1v1h-1zM586 608h1v1h-1zM586 617h1v1h-1zM586 626h1v1h-1zM586 635h1v1h-1zM586 644h1v1h-1zM586 653h1v1h-1zM586 662h1v1h-1zM586 671h1v1h-1zM586 680h1v1h-1zM586 688h1v1h-1zM586 697h1v1h-1zM586 706h1v1h-1zM586 715h1v1h-1zM586 724h1v1h-1zM586 733h1v1h-1zM586 742h1v1h-1zM586 751h1v1h-1zM586 769h1v1h-1zM586 777h1v1h-1zM586 786h1v1h-1zM586 795h1v1h-1zM586 804h1v1h-1zM586 813h1v1h-1zM586 822h1v1h-1zM586 831h1v1h-1zM586 840h1v1h-1zM586 849h1v1h-1zM586 857h1v1h-1zM586 866h1v1h-1zM586 875h1v1h-1zM586 884h1v1h-1zM586 893h1v1h-1zM586 902h1v1h-1zM586 911h1v1h-1zM586 920h1v1h-1zM586 929h1v1h-1zM586 937h1v1h-1zM586 946h1v1h-1zM755 528h1v1h-1zM755 537h1v1h-1zM755 546h1v1h-1zM755 555h1v1h-1zM755 564h1v1h-1zM755 573h1v1h-1zM755 582h1v1h-1zM755 591h1v1h-1zM755 600h1v1h-1zM755 608h1v1h-1zM755 617h1v1h-1zM755 626h1v1h-1zM755 635h1v1h-1zM755 644h1v1h-1zM755 653h1v1h-1zM755 662h1v1h-1zM755 671h1v1h-1zM755 680h1v1h-1zM755 688h1v1h-1zM755 697h1v1h-1zM755 706h1v1h-1zM755 715h1v1h-1zM755 724h1v1h-1zM755 733h1v1h-1zM755 742h1v1h-1zM755 751h1v1h-1zM755 769h1v1h-1zM755 777h1v1h-1zM755 786h1v1h-1zM755 795h1v1h-1zM755 804h1v1h-1zM755 813h1v1h-1zM755 822h1v1h-1zM755 831h1v1h-1zM755 840h1v1h-1zM755 849h1v1h-1zM755 857h1v1h-1zM755 866h1v1h-1zM755 875h1v1h-1zM755 884h1v1h-1zM755 893h1v1h-1zM755 902h1v1h-1zM755 911h1v1h-1zM755 920h1v1h-1zM755 929h1v1h-1zM755 937h1v1h-1zM755 946h1v1h-1zM925 528h1v1h-1zM925 537h1v1h-1zM925 546h1v1h-1zM925 555h1v1h-1zM925 564h1v1h-1zM925 573h1v1h-1zM925 582h1v1h-1zM925 591h1v1h-1zM925 600h1v1h-1zM925 608h1v1h-1zM925 617h1v1h-1zM925 626h1v1h-1zM925 635h1v1h-1zM925 644h1v1h-1zM925 653h1v1h-1zM925 662h1v1h-1zM925 671h1v1h-1zM925 680h1v1h-1zM925 688h1v1h-1zM925 697h1v1h-1zM925 706h1v1h-1zM925 715h1v1h-1zM925 724h1v1h-1zM925 733h1v1h-1zM925 742h1v1h-1zM925 751h1v1h-1zM925 769h1v1h-1zM925 777h1v1h-1zM925 786h1v1h-1zM925 795h1v1h-1zM925 804h1v1h-1zM925 813h1v1h-1zM925 822h1v1h-1zM925 831h1v1h-1zM925 840h1v1h-1zM925 849h1v1h-1zM925 857h1v1h-1zM925 866h1v1h-1zM925 875h1v1h-1zM925 884h1v1h-1zM925 893h1v1h-1zM925 902h1v1h-1zM925 911h1v1h-1zM925 920h1v1h-1zM925 929h1v1h-1zM925 937h1v1h-1zM925 946h1v1h-1zM1095 528h1v1h-1zM1095 537h1v1h-1zM1095 546h1v1h-1zM1095 555h1v1h-1zM1095 564h1v1h-1zM1095 573h1v1h-1zM1095 582h1v1h-1zM1095 591h1v1h-1zM1095 600h1v1h-1zM1095 608h1v1h-1zM1095 617h1v1h-1zM1095 626h1v1h-1zM1095 635h1v1h-1zM1095 644h1v1h-1zM1095 653h1v1h-1zM1095 662h1v1h-1zM1095 671h1v1h-1zM1095 680h1v1h-1zM1095 688h1v1h-1zM1095 697h1v1h-1zM1095 706h1v1h-1zM1095 715h1v1h-1zM1095 724h1v1h-1zM1095 733h1v1h-1zM1095 742h1v1h-1zM1095 751h1v1h-1zM1095 769h1v1h-1zM1095 777h1v1h-1zM1095 786h1v1h-1zM1095 795h1v1h-1zM1095 804h1v1h-1zM1095 813h1v1h-1zM1095 822h1v1h-1zM1095 831h1v1h-1zM1095 840h1v1h-1zM1095 849h1v1h-1zM1095 857h1v1h-1zM1095 866h1v1h-1zM1095 875h1v1h-1zM1095 884h1v1h-1zM1095 893h1v1h-1zM1095 902h1v1h-1zM1095 911h1v1h-1zM1095 920h1v1h-1zM1095 929h1v1h-1zM1095 937h1v1h-1zM1095 946h1v1h-1zM1265 528h1v1h-1zM1265 537h1v1h-1zM1265 546h1v1h-1zM1265 555h1v1h-1zM1265 564h1v1h-1zM1265 573h1v1h-1zM1265 582h1v1h-1zM1265 591h1v1h-1zM1265 600h1v1h-1zM1265 608h1v1h-1zM1265 617h1v1h-1zM1265 626h1v1h-1zM1265 635h1v1h-1zM1265 644h1v1h-1zM1265 653h1v1h-1zM1265 662h1v1h-1zM1265 671h1v1h-1zM1265 680h1v1h-1zM1265 688h1v1h-1zM1265 697h1v1h-1zM1265 706h1v1h-1zM1265 715h1v1h-1zM1265 724h1v1h-1zM1265 733h1v1h-1zM1265 742h1v1h-1zM1265 751h1v1h-1zM1265 769h1v1h-1zM1265 777h1v1h-1zM1265 786h1v1h-1zM1265 795h1v1h-1zM1265 804h1v1h-1zM1265 813h1v1h-1zM1265 822h1v1h-1zM1265 831h1v1h-1zM1265 840h1v1h-1zM1265 849h1v1h-1zM1265 857h1v1h-1zM1265 866h1v1h-1zM1265 875h1v1h-1zM1265 884h1v1h-1zM1265 893h1v1h-1zM1265 902h1v1h-1zM1265 911h1v1h-1zM1265 920h1v1h-1zM1265 929h1v1h-1zM1265 937h1v1h-1zM1265 946h1v1h-1zM1435 528h1v1h-1zM1435 537h1v1h-1zM1435 546h1v1h-1zM1435 555h1v1h-1zM1435 564h1v1h-1zM1435 573h1v1h-1zM1435 582h1v1h-1zM1435 591h1v1h-1zM1435 600h1v1h-1zM1435 608h1v1h-1zM1435 617h1v1h-1zM1435 626h1v1h-1zM1435 635h1v1h-1zM1435 644h1v1h-1zM1435 653h1v1h-1zM1435 662h1v1h-1zM1435 671h1v1h-1zM1435 680h1v1h-1zM1435 688h1v1h-1zM1435 697h1v1h-1zM1435 706h1v1h-1zM1435 715h1v1h-1zM1435 724h1v1h-1zM1435 733h1v1h-1zM1435 742h1v1h-1zM1435 751h1v1h-1zM1435 769h1v1h-1zM1435 777h1v1h-1zM1435 786h1v1h-1zM1435 795h1v1h-1zM1435 804h1v1h-1zM1435 813h1v1h-1zM1435 822h1v1h-1zM1435 831h1v1h-1zM1435 840h1v1h-1zM1435 849h1v1h-1zM1435 857h1v1h-1zM1435 866h1v1h-1zM1435 875h1v1h-1zM1435 884h1v1h-1zM1435 893h1v1h-1zM1435 902h1v1h-1zM1435 911h1v1h-1zM1435 920h1v1h-1zM1435 929h1v1h-1zM1435 937h1v1h-1zM1435 946h1v1h-1zM1605 528h1v1h-1zM1605 537h1v1h-1zM1605 546h1v1h-1zM1605 555h1v1h-1zM1605 564h1v1h-1zM1605 573h1v1h-1zM1605 582h1v1h-1zM1605 591h1v1h-1zM1605 600h1v1h-1zM1605 608h1v1h-1zM1605 617h1v1h-1zM1605 626h1v1h-1zM1605 635h1v1h-1zM1605 644h1v1h-1zM1605 653h1v1h-1zM1605 662h1v1h-1zM1605 671h1v1h-1zM1605 680h1v1h-1zM1605 688h1v1h-1zM1605 697h1v1h-1zM1605 706h1v1h-1zM1605 715h1v1h-1zM1605 724h1v1h-1zM1605 733h1v1h-1zM1605 742h1v1h-1zM1605 751h1v1h-1zM1605 769h1v1h-1zM1605 777h1v1h-1zM1605 786h1v1h-1zM1605 795h1v1h-1zM1605 804h1v1h-1zM1605 813h1v1h-1zM1605 822h1v1h-1zM1605 831h1v1h-1zM1605 840h1v1h-1zM1605 849h1v1h-1zM1605 857h1v1h-1zM1605 866h1v1h-1zM1605 875h1v1h-1zM1605 884h1v1h-1zM1605 893h1v1h-1zM1605 902h1v1h-1zM1605 911h1v1h-1zM1605 920h1v1h-1zM1605 929h1v1h-1zM1605 937h1v1h-1zM1605 946h1v1h-1z" fill="#b4b4b4"/>
<path d="M246 207h1v214h-1zM671 183h1v214h-1zM1096 207h1v214h-1zM1520 183h1v214h-1z" fill="#b09c00"/>
<path d="M13 418h233v3h-233zM247 203h1v7h-1zM248 202h1v4h-1zM249 200h1v5h-1zM250 199h1v4h-1zM251 198h1v4h-1zM252 198h1v3h-1zM253 197h1v4h-1zM254 196h1v4h-1zM255 196h1v3h-1zM256 195h1v4h-1zM257 194h1v4h-1zM258 194h1v3h-1zM259 193h1v4h-1zM260 193h2v3h-2zM262 192h1v4h-1zM263 192h1v3h-1zM264 191h1v4h-1zM265 191h2v3h-2zM267 190h1v4h-1zM268 190h3v3h-3zM271 189h1v4h-1zM272 189h3v3h-3zM275 188h1v4h-1zM276 188h4v3h-4zM280 187h1v4h-1zM281 187h7v3h-7zM288 186h1v4h-1zM289 186h9v3h-9zM298 185h1v4h-1zM299 185h17v3h-17zM316 184h1v4h-1zM317 184h39v3h-39zM356 183h1v4h-1zM357 183h314v3h-314zM672 394h1v7h-1zM673 398h1v4h-1zM674 399h1v5h-1zM675 401h1v4h-1zM676 402h1v4h-1zM677 403h1v3h-1zM678 403h1v4h-1zM679 404h1v4h-1zM680 405h1v3h-1zM681 405h1v4h-1zM682 406h1v4h-1zM683 407h1v3h-1zM684 407h1v4h-1zM685 408h2v3h-2zM687 408h1v4h-1zM688 409h1v3h-1zM689 409h1v4h-1zM690 410h2v3h-2zM692 410h1v4h-1zM693 411h3v3h-3zM696 411h1v4h-1zM697 412h3v3h-3zM700 412h1v4h-1zM701 413h4v3h-4zM705 413h1v4h-1zM706 414h7v3h-7zM713 414h1v4h-1zM714 415h9v3h-9zM723 415h1v4h-1zM724 416h17v3h-17zM741 416h1v4h-1zM742 417h39v3h-39zM781 417h1v4h-1zM782 418h314v3h-314zM1097 203h1v7h-1zM1098 202h1v4h-1zM1099 200h1v5h-1zM1100 199h1v4h-1zM1101 198h1v4h-1zM1102 198h1v3h-1zM1103 197h1v4h-1zM1104 196h1v4h-1zM1105 196h1v3h-1zM1106 195h1v4h-1zM1107 194h1v4h-1zM1108 194h1v3h-1zM1109 193h1v4h-1zM1110 193h2v3h-2zM1112 192h1v4h-1zM1113 192h1v3h-1zM1114 191h1v4h-1zM1115 191h2v3h-2zM1117 190h1v4h-1zM1118 190h3v3h-3zM1121 189h1v4h-1zM1122 189h3v3h-3zM1125 188h1v4h-1zM1126 188h4v3h-4zM1130 187h1v4h-1zM1131 187h7v3h-7zM1138 186h1v4h-1zM1139 186h9v3h-9zM1148 185h1v4h-1zM1149 185h17v3h-17zM1166 184h1v4h-1zM1167 184h39v3h-39zM1206 183h1v4h-1zM1207 183h313v3h-313zM1521 394h1v7h-1zM1522 398h1v4h-1zM1523 399h1v5h-1zM1524 401h1v4h-1zM1525 402h1v4h-1zM1526 403h1v3h-1zM1527 403h1v4h-1zM1528 404h1v4h-1zM1529 405h1v3h-1zM1530 405h1v4h-1zM1531 406h1v4h-1zM1532 407h1v3h-1zM1533 407h1v4h-1zM1534 408h2v3h-2zM1536 408h1v4h-1zM1537 409h1v3h-1zM1538 409h1v4h-1zM1539 410h2v3h-2zM1541 410h1v4h-1zM1542 411h3v3h-3zM1545 411h1v4h-1zM1546 412h3v3h-3zM1549 412h1v4h-1zM1550 413h4v3h-4zM1554 413h1v4h-1zM1555 414h7v3h-7zM1562 414h1v4h-1zM1563 415h9v3h-9zM1572 415h1v4h-1zM1573 416h17v3h-17zM1590 416h1v4h-1zM1591 417h39v3h-39zM1630 417h1v4h-1zM1631 418h80v3h-80z" fill="#fff21a"/>
<path d="M247 664h1v212h-1zM671 640h1v212h-1zM1096 664h1v212h-1zM1520 640h1v212h-1z" fill="#14929a"/>
<path d="M13 874h234v2h-234zM248 660h1v6h-1zM249 659h1v3h-1zM250 657h1v4h-1zM251 656h1v3h-1zM252 655h1v3h-1zM253 655h1v2h-1zM254 654h1v3h-1zM255 653h1v3h-1zM256 653h1v2h-1zM257 652h1v3h-1zM258 651h1v3h-1zM259 651h1v2h-1zM260 650h1v3h-1zM261 650h2v2h-2zM263 649h1v3h-1zM264 649h1v2h-1zM265 648h1v3h-1zM266 648h2v2h-2zM268 647h1v3h-1zM269 647h3v2h-3zM272 646h1v3h-1zM273 646h3v2h-3zM276 645h1v3h-1zM277 645h4v2h-4zM281 644h1v3h-1zM282 644h7v2h-7zM289 643h1v3h-1zM290 643h9v2h-9zM299 642h1v3h-1zM300 642h17v2h-17zM317 641h1v3h-1zM318 641h39v2h-39zM357 640h1v3h-1zM358 640h313v2h-313zM672 850h1v6h-1zM673 854h1v3h-1zM674 855h1v4h-1zM675 857h1v3h-1zM676 858h1v3h-1zM677 859h1v2h-1zM678 859h1v3h-1zM679 860h1v3h-1zM680 861h1v2h-1zM681 861h1v3h-1zM682 862h1v3h-1zM683 863h1v2h-1zM684 863h1v3h-1zM685 864h2v2h-2zM687 864h1v3h-1zM688 865h1v2h-1zM689 865h1v3h-1zM690 866h2v2h-2zM692 866h1v3h-1zM693 867h3v2h-3zM696 867h1v3h-1zM697 868h3v2h-3zM700 868h1v3h-1zM701 869h4v2h-4zM705 869h1v3h-1zM706 870h7v2h-7zM713 870h1v3h-1zM714 871h9v2h-9zM723 871h1v3h-1zM724 872h17v2h-17zM741 872h1v3h-1zM742 873h39v2h-39zM781 873h1v3h-1zM782 874h314v2h-314zM1097 660h1v6h-1zM1098 659h1v3h-1zM1099 657h1v4h-1zM1100 656h1v3h-1zM1101 655h1v3h-1zM1102 655h1v2h-1zM1103 654h1v3h-1zM1104 653h1v3h-1zM1105 653h1v2h-1zM1106 652h1v3h-1zM1107 651h1v3h-1zM1108 651h1v2h-1zM1109 650h1v3h-1zM1110 650h2v2h-2zM1112 649h1v3h-1zM1113 649h1v2h-1zM1114 648h1v3h-1zM1115 648h2v2h-2zM1117 647h1v3h-1zM1118 647h3v2h-3zM1121 646h1v3h-1zM1122 646h3v2h-3zM1125 645h1v3h-1zM1126 645h4v2h-4zM1130 644h1v3h-1zM1131 644h7v2h-7zM1138 643h1v3h-1zM1139 643h9v2h-9zM1148 642h1v3h-1zM1149 642h17v2h-17zM1166 641h1v3h-1zM1167 641h39v2h-39zM1206 640h1v3h-1zM1207 640h313v2h-313zM1521 850h1v6h-1zM1522 854h1v3h-1zM1523 855h1v4h-1zM1524 857h1v3h-1zM1525 858h1v3h-1zM1526 859h1v2h-1zM1527 859h1v3h-1zM1528 860h1v3h-1zM1529 861h1v2h-1zM1530 861h1v3h-1zM1531 862h1v3h-1zM1532 863h1v2h-1zM1533 863h1v3h-1zM1534 864h2v2h-2zM1536 864h1v3h-1zM1537 865h1v2h-1zM1538 865h1v3h-1zM1539 866h2v2h-2zM1541 866h1v3h-1zM1542 867h3v2h-3zM1545 867h1v3h-1zM1546 868h3v2h-3zM1549 868h1v3h-1zM1550 869h4v2h-4zM1554 869h1v3h-1zM1555 870h7v2h-7zM1562 870h1v3h-1zM1563 871h9v2h-9zM1572 871h1v3h-1zM1573 872h17v2h-17zM1590 872h1v3h-1zM1591 873h39v2h-39zM1630 873h1v3h-1zM1631 874h80v2h-80z" fill="#22d4dc"/>
<path d="M14 301h5v1h-5zM24 301h5v1h-5zM34 301h5v1h-5zM44 301h5v1h-5zM54 301h5v1h-5zM64 301h5v1h-5zM74 301h5v1h-5zM84 301h5v1h-5zM94 301h5v1h-5zM104 301h5v1h-5zM114 301h5v1h-5zM124 301h5v1h-5zM134 301h5v1h-5zM144 301h5v1h-5zM154 301h5v1h-5zM164 301h5v1h-5zM174 301h5v1h-5zM184 301h5v1h-5zM194 301h5v1h-5zM204 301h5v1h-5zM214 301h5v1h-5zM224 301h5v1h-5zM234 301h5v1h-5zM244 301h5v1h-5zM254 301h5v1h-5zM264 301h5v1h-5zM274 301h5v1h-5zM284 301h5v1h-5zM294 301h5v1h-5zM304 301h5v1h-5zM314 301h5v1h-5zM324 301h5v1h-5zM334 301h5v1h-5zM344 301h5v1h-5zM354 301h5v1h-5zM364 301h5v1h-5zM374 301h5v1h-5zM384 301h5v1h-5zM394 301h5v1h-5zM404 301h5v1h-5zM414 301h5v1h-5zM424 301h5v1h-5zM434 301h5v1h-5zM444 301h5v1h-5zM454 301h5v1h-5zM464 301h5v1h-5zM474 301h5v1h-5zM484 301h5v1h-5zM494 301h5v1h-5zM504 301h5v1h-5zM514 301h5v1h-5zM524 301h5v1h-5zM534 301h5v1h-5zM544 301h5v1h-5zM554 301h5v1h-5zM564 301h5v1h-5zM574 301h5v1h-5zM584 301h5v1h-5zM594 301h5v1h-5zM604 301h5v1h-5zM614 301h5v1h-5zM624 301h5v1h-5zM634 301h5v1h-5zM644 301h5v1h-5zM654 301h5v1h-5zM664 301h5v1h-5zM674 301h5v1h-5zM684 301h5v1h-5zM694 301h5v1h-5zM704 301h5v1h-5zM714 301h5v1h-5zM724 301h5v1h-5zM734 301h5v1h-5zM744 301h5v1h-5zM754 301h5v1h-5zM764 301h5v1h-5zM774 301h5v1h-5zM784 301h5v1h-5zM794 301h5v1h-5zM804 301h5v1h-5zM814 301h5v1h-5zM824 301h5v1h-5zM834 301h5v1h-5zM844 301h5v1h-5zM854 301h5v1h-5zM864 301h5v1h-5zM874 301h5v1h-5zM884 301h5v1h-5zM894 301h5v1h-5zM904 301h5v1h-5zM914 301h5v1h-5zM924 301h5v1h-5zM934 301h5v1h-5zM944 301h5v1h-5zM954 301h5v1h-5zM964 301h5v1h-5zM974 301h5v1h-5zM984 301h5v1h-5zM994 301h5v1h-5zM1004 301h5v1h-5zM1014 301h5v1h-5zM1024 301h5v1h-5zM1034 301h5v1h-5zM1044 301h5v1h-5zM1054 301h5v1h-5zM1064 301h5v1h-5zM1074 301h5v1h-5zM1084 301h5v1h-5zM1094 301h5v1h-5zM1104 301h5v1h-5zM1114 301h5v1h-5zM1124 301h5v1h-5zM1134 301h5v1h-5zM1144 301h5v1h-5zM1154 301h5v1h-5zM1164 301h5v1h-5zM1174 301h5v1h-5zM1184 301h5v1h-5zM1194 301h5v1h-5zM1204 301h5v1h-5zM1214 301h5v1h-5zM1224 301h5v1h-5zM1234 301h5v1h-5zM1244 301h5v1h-5zM1254 301h5v1h-5zM1264 301h5v1h-5zM1274 301h5v1h-5zM1284 301h5v1h-5zM1294 301h5v1h-5zM1304 301h5v1h-5zM1314 301h5v1h-5zM1324 301h5v1h-5zM1334 301h5v1h-5zM1344 301h5v1h-5zM1354 301h5v1h-5zM1364 301h5v1h-5zM1374 301h5v1h-5zM1384 301h5v1h-5zM1394 301h5v1h-5zM1404 301h5v1h-5zM1414 301h5v1h-5zM1424 301h5v1h-5zM1434 301h5v1h-5zM1444 301h5v1h-5zM1454 301h5v1h-5zM1464 301h5v1h-5zM1474 301h5v1h-5zM1484 301h5v1h-5zM1494 301h5v1h-5zM1504 301h5v1h-5zM1514 301h5v1h-5zM1524 301h5v1h-5zM1534 301h5v1h-5zM1544 301h5v1h-5zM1554 301h5v1h-5zM1564 301h5v1h-5zM1574 301h5v1h-5zM1584 301h5v1h-5zM1594 301h5v1h-5zM1604 301h5v1h-5zM1614 301h5v1h-5zM1624 301h5v1h-5zM1634 301h5v1h-5zM1644 301h5v1h-5zM1654 301h5v1h-5zM1664 301h5v1h-5zM1674 301h5v1h-5zM14 759h5v1h-5zM24 759h5v1h-5zM34 759h5v1h-5zM44 759h5v1h-5zM54 759h5v1h-5zM64 759h5v1h-5zM74 759h5v1h-5zM84 759h5v1h-5zM94 759h5v1h-5zM104 759h5v1h-5zM114 759h5v1h-5zM124 759h5v1h-5zM134 759h5v1h-5zM144 759h5v1h-5zM154 759h5v1h-5zM164 759h5v1h-5zM174 759h5v1h-5zM184 759h5v1h-5zM194 759h5v1h-5zM204 759h5v1h-5zM214 759h5v1h-5zM224 759h5v1h-5zM234 759h5v1h-5zM244 759h5v1h-5zM254 759h5v1h-5zM264 759h5v1h-5zM274 759h5v1h-5zM284 759h5v1h-5zM294 759h5v1h-5zM304 759h5v1h-5zM314 759h5v1h-5zM324 759h5v1h-5zM334 759h5v1h-5zM344 759h5v1h-5zM354 759h5v1h-5zM364 759h5v1h-5zM374 759h5v1h-5zM384 759h5v1h-5zM394 759h5v1h-5zM404 759h5v1h-5zM414 759h5v1h-5zM424 759h5v1h-5zM434 759h5v1h-5zM444 759h5v1h-5zM454 759h5v1h-5zM464 759h5v1h-5zM474 759h5v1h-5zM484 759h5v1h-5zM494 759h5v1h-5zM504 759h5v1h-5zM514 759h5v1h-5zM524 759h5v1h-5zM534 759h5v1h-5zM544 759h5v1h-5zM554 759h5v1h-5zM564 759h5v1h-5zM574 759h5v1h-5zM584 759h5v1h-5zM594 759h5v1h-5zM604 759h5v1h-5zM614 759h5v1h-5zM624 759h5v1h-5zM634 759h5v1h-5zM644 759h5v1h-5zM654 759h5v1h-5zM664 759h5v1h-5zM674 759h5v1h-5zM684 759h5v1h-5zM694 759h5v1h-5zM704 759h5v1h-5zM714 759h5v1h-5zM724 759h5v1h-5zM734 759h5v1h-5zM744 759h5v1h-5zM754 759h5v1h-5zM764 759h5v1h-5zM774 759h5v1h-5zM784 759h5v1h-5zM794 759h5v1h-5zM804 759h5v1h-5zM814 759h5v1h-5zM824 759h5v1h-5zM834 759h5v1h-5zM844 759h5v1h-5zM854 759h5v1h-5zM864 759h5v1h-5zM874 759h5v1h-5zM884 759h5v1h-5zM894 759h5v1h-5zM904 759h5v1h-5zM914 759h5v1h-5zM924 759h5v1h-5zM934 759h5v1h-5zM944 759h5v1h-5zM954 759h5v1h-5zM964 759h5v1h-5zM974 759h5v1h-5zM984 759h5v1h-5zM994 759h5v1h-5zM1004 759h5v1h-5zM1014 759h5v1h-5zM1024 759h5v1h-5zM1034 759h5v1h-5zM1044 759h5v1h-5zM1054 759h5v1h-5zM1064 759h5v1h-5zM1074 759h5v1h-5zM1084 759h5v1h-5zM1094 759h5v1h-5zM1104 759h5v1h-5zM1114 759h5v1h-5zM1124 759h5v1h-5zM1134 759h5v1h-5zM1144 759h5v1h-5zM1154 759h5v1h-5zM1164 759h5v1h-5zM1174 759h5v1h-5zM1184 759h5v1h-5zM1194 759h5v1h-5zM1204 759h5v1h-5zM1214 759h5v1h-5zM1224 759h5v1h-5zM1234 759h5v1h-5zM1244 759h5v1h-5zM1254 759h5v1h-5zM1264 759h5v1h-5zM1274 759h5v1h-5zM1284 759h5v1h-5zM1294 759h5v1h-5zM1304 759h5v1h-5zM1314 759h5v1h-5zM1324 759h5v1h-5zM1334 759h5v1h-5zM1344 759h5v1h-5zM1354 759h5v1h-5zM1364 759h5v1h-5zM1374 759h5v1h-5zM1384 759h5v1h-5zM1394 759h5v1h-5zM1404 759h5v1h-5zM1414 759h5v1h-5zM1424 759h5v1h-5zM1434 759h5v1h-5zM1444 759h5v1h-5zM1454 759h5v1h-5zM1464 759h5v1h-5zM1474 759h5v1h-5zM1484 759h5v1h-5zM1494 759h5v1h-5zM1504 759h5v1h-5zM1514 759h5v1h-5zM1524 759h5v1h-5zM1534 759h5v1h-5zM1544 759h5v1h-5zM1554 759h5v1h-5zM1564 759h5v1h-5zM1574 759h5v1h-5zM1584 759h5v1h-5zM1594 759h5v1h-5zM1604 759h5v1h-5zM1614 759h5v1h-5zM1624 759h5v1h-5zM1634 759h5v1h-5zM1644 759h5v1h-5zM1654 759h5v1h-5zM1664 759h5v1h-5zM1674 759h5v1h-5zM246 112h1v2h-1zM246 119h1v5h-1zM246 129h1v5h-1zM246 139h1v5h-1zM246 149h1v5h-1zM246 159h1v5h-1zM246 169h1v5h-1zM246 179h1v5h-1zM246 189h1v5h-1zM246 199h1v5h-1zM246 209h1v5h-1zM246 219h1v5h-1zM246 229h1v5h-1zM246 239h1v5h-1zM246 249h1v5h-1zM246 259h1v5h-1zM246 269h1v5h-1zM246 279h1v5h-1zM246 289h1v5h-1zM246 299h1v5h-1zM246 309h1v5h-1zM246 319h1v5h-1zM246 329h1v5h-1zM246 339h1v5h-1zM246 349h1v5h-1zM246 359h1v5h-1zM246 369h1v5h-1zM246 379h1v5h-1zM246 389h1v5h-1zM246 399h1v5h-1zM246 409h1v5h-1zM246 419h1v5h-1zM246 429h1v5h-1zM246 439h1v5h-1zM246 449h1v5h-1zM246 459h1v5h-1zM246 469h1v5h-1zM246 479h1v5h-1zM246 489h1v5h-1zM246 499h1v5h-1zM246 509h1v5h-1zM246 521h1v1h-1zM246 527h1v5h-1zM246 537h1v5h-1zM246 547h1v5h-1zM246 557h1v5h-1zM246 567h1v5h-1zM246 577h1v5h-1zM246 587h1v5h-1zM246 597h1v5h-1zM246 607h1v5h-1zM246 617h1v5h-1zM246 627h1v5h-1zM246 637h1v5h-1zM246 647h1v5h-1zM246 657h1v5h-1zM246 667h1v5h-1zM246 677h1v5h-1zM246 687h1v5h-1zM246 697h1v5h-1zM246 707h1v5h-1zM246 717h1v5h-1zM246 727h1v5h-1zM246 737h1v5h-1zM246 747h1v5h-1zM246 757h1v5h-1zM246 767h1v5h-1zM246 777h1v5h-1zM246 787h1v5h-1zM246 797h1v5h-1zM246 807h1v5h-1zM246 817h1v5h-1zM246 827h1v5h-1zM246 837h1v5h-1zM246 847h1v5h-1zM246 857h1v5h-1zM246 867h1v5h-1zM246 877h1v5h-1zM246 887h1v5h-1zM246 897h1v5h-1zM246 907h1v5h-1zM246 917h1v5h-1zM246 927h1v5h-1zM246 937h1v5h-1zM246 947h1v5h-1zM246 957h1v5h-1z" fill="#c8c8c8"/>
</svg>

<!-- markers svg (antialiased) -->
<svg class="a" style="left:13px;top:75px" width="1698" height="890" viewBox="13 75 1698 890">
<!-- trigger marker -->
<path d="M235 75h20l-9.8 9.4z" fill="#f39228"/>
<path d="M235 85H255V106.5H249.4L245.2 112.8L241 106.5H235ZM237.3 87.3V104.2H242.2L245.2 108.6L248.2 104.2H252.7V87.3Z" fill="#f39228" fill-rule="evenodd"/>
<path d="M240.6 90.3h8.5v2.3h-3.1v8.8h-2.3v-8.8h-3.1z" fill="#f39228"/>
<!-- C1 marker -->
<path d="M17 288.5a2 2 0 0 1 2-2h25l14 14.5l-14 15h-25a2 2 0 0 1-2-2z" fill="#1e1c08" stroke="#e8dc20" stroke-width="1.4"/>
<text x="28.7" y="305.6" font-family="Liberation Sans" font-size="13" fill="#e8dc20">C</text><text x="40.3" y="305.6" font-family="Liberation Sans" font-size="13" fill="#e8dc20">1</text>
<!-- C2 marker -->
<path d="M17 747a2 2 0 0 1 2-2h25l14 14.5l-14 15h-25a2 2 0 0 1-2-2z" fill="#22ccd4"/>
<text x="28.7" y="763.4" font-family="Liberation Sans" font-size="13" fill="#000">C</text><text x="40.3" y="763.4" font-family="Liberation Sans" font-size="13" fill="#000">2</text>
</svg>
<div class="vl c1l" style="top:114.45px">800 mV</div>
<div class="vl c1l" style="top:159.01px">600 mV</div>
<div class="vl c1l" style="top:203.56px">400 mV</div>
<div class="vl c1l" style="top:248.12px">200 mV</div>
<div class="vl c1l" style="top:292.67px">0 V</div>
<div class="vl c1l" style="top:337.23px">-200 mV</div>
<div class="vl c1l" style="top:381.78px">-400 mV</div>
<div class="vl c1l" style="top:426.33px">-600 mV</div>
<div class="vl c1l" style="top:470.89px">-800 mV</div>
<div class="vl c2l" style="top:527.55px">1000 mV</div>
<div class="vl c2l" style="top:572.10px">800 mV</div>
<div class="vl c2l" style="top:616.66px">600 mV</div>
<div class="vl c2l" style="top:661.21px">400 mV</div>
<div class="vl c2l" style="top:705.77px">200 mV</div>
<div class="vl c2l" style="top:750.32px">0 V</div>
<div class="vl c2l" style="top:794.88px">-200 mV</div>
<div class="vl c2l" style="top:839.43px">-400 mV</div>
<div class="vl c2l" style="top:883.99px">-600 mV</div>
<div class="vl c2l" style="top:928.54px">-800 mV</div>
<div class="hl" style="left:26.4px"><span>-200 µs</span></div>
<div class="hl" style="left:196.3px"><span>0 s</span></div>
<div class="hl" style="left:366.2px"><span>200 µs</span></div>
<div class="hl" style="left:536.1px"><span>400 µs</span></div>
<div class="hl" style="left:706.0px"><span>600 µs</span></div>
<div class="hl" style="left:875.9px"><span>800 µs</span></div>
<div class="hl" style="left:1045.8px"><span>1 ms</span></div>
<div class="hl" style="left:1215.7px"><span>1.2 ms</span></div>
<div class="hl" style="left:1385.6px"><span>1.4 ms</span></div>
<div class="hl" style="left:1555.5px"><span>1.6 ms</span></div><svg class="a" style="left:240px;top:944px" width="12" height="21" viewBox="240 944 12 21" shape-rendering="crispEdges"><path d="M246 947h1v5h-1zM246 957h1v5h-1z" fill="#c8c8c8"/></svg>
<svg class="a" style="left:1660px;top:80px" width="50" height="46" viewBox="1660 80 50 46">
<path d="M1663 83h37a4 4 0 0 1 4 4v36z" fill="#505050"/>
<circle cx="1695.8" cy="90.3" r="4.8" fill="none" stroke="#9c9c9c" stroke-width="1.6"/>
<path d="M1692.3 94.2l-7.3 6.3" stroke="#9c9c9c" stroke-width="2.8" stroke-linecap="round"/>
</svg>
<!-- arrow marker ch1 right -->
<svg class="a" style="left:1686px;top:284px" width="28" height="28" viewBox="1686 284 28 28">
<path d="M1701.3 288.2L1690.9 297.6L1701.3 306.8Z" fill="#fbf032" stroke="#fbf032" stroke-width="1.6" stroke-linejoin="round"/>
<rect x="1701" y="296" width="10" height="3.6" fill="#fbf032"/>
</svg>
<!-- three dots -->
<div class="a" style="left:1721px;top:495px;width:4px;height:4px;border-radius:2px;background:#c4c4c4"></div>
<div class="a" style="left:1721px;top:503px;width:4px;height:4px;border-radius:2px;background:#c4c4c4"></div>
<div class="a" style="left:1721px;top:511px;width:4px;height:4px;border-radius:2px;background:#c4c4c4"></div>

<!-- right panel -->
<div id="rpanel" class="a"></div>
<div class="a" style="left:1730px;top:45px;width:181px;text-align:center;font-size:18px;line-height:19px;font-weight:bold;letter-spacing:0.6px;color:#ececec;top:45px">Add New...</div>
<div class="btn" style="left:1740px;top:71.5px">Cursors</div>
<div class="btn" style="left:1827px;top:71.5px">Callout</div>
<div class="btn" style="left:1740px;top:127.5px">Measure</div>
<div class="btn" style="left:1827px;top:127.5px">Search</div>
<div class="btn" style="left:1740px;top:182.5px">Results<br>Table</div>
<div class="btn" style="left:1827px;top:182.5px">Plot</div>
<div class="hsep" style="top:235px"></div>
<div class="btn" style="left:1740px;top:243.5px">
<svg width="30" height="28" viewBox="0 0 30 28" style="position:relative;left:0;top:1.6px">
<path d="M2.5 1.7h3.1v2.2h-0.9v0.9h-2.2zM8.3 1.7h4.3v2.2h-4.3zM15.5 1.7h4.3v2.2h-4.3zM22.5 1.7h3.4v3.1h-2.2v-0.9h-1.2zM2.5 6.8h2.2v3.3h-2.2zM2.5 13h2.2v3.4h-2.2zM23.7 6.8h2.2v3.3h-2.2zM23.7 13h2.2v3.4h-2.2zM2.5 19.5h2.2v0.5h0.9v2.2h-3.1zM8.3 20h4.3v2.2h-4.3zM15.5 20h4.3v2.2h-4.3z" fill="#c4c4c6"/>
<circle cx="16" cy="10.4" r="4.4" fill="none" stroke="#c4c4c6" stroke-width="1.9"/>
<path d="M12.6 14.3l-4.6 2.8" stroke="#c4c4c6" stroke-width="2.6" stroke-linecap="round"/>
<path d="M20.3 16.9L28.8 21.2L25.6 22.2L27.8 25L26.1 26.2L24 23.4L22.2 25.4Z" fill="#c4c4c6"/>
</svg></div>
<div class="btn" style="left:1827px;top:243.5px">More...</div>
<div class="hsep" style="top:297px"></div>

<!-- bottom bar -->
<div class="badge" style="left:13px"><div class="bh" style="background:#4a4422;color:#f2e82e">Ch 1</div><div class="bl"></div>
<div class="bt" style="top:25px">200 mV/div</div>
<svg class="a" style="left:6px;top:47px" width="20" height="16" viewBox="0 0 20 16"><path d="M2.2 9.5C3 4 6.5 1.5 9.7 1.5S16 4 16.4 9" fill="none" stroke="#3a3a3a" stroke-width="1.8"/><circle cx="9.5" cy="5.4" r="3.2" fill="none" stroke="#2a2a2a" stroke-width="1.5"/><ellipse cx="3.1" cy="10.8" rx="1.9" ry="3.2" fill="#d4d4d4" stroke="#666" stroke-width="1.1"/><rect x="13.9" y="8.2" width="4.6" height="6.3" fill="#e2e2e2" stroke="#555" stroke-width="1.1"/></svg>
<div class="bt" style="top:70px">20 MHz</div>
<svg class="a" style="left:85px;top:68px" width="22" height="16" viewBox="0 0 22 16"><text x="0.5" y="10" font-family="Liberation Sans" font-weight="bold" font-size="11.5" fill="#111" textLength="7">B</text><text x="6.3" y="14" font-family="Liberation Sans" font-weight="bold" font-size="11" fill="#111" textLength="7.2" lengthAdjust="spacingAndGlyphs">w</text></svg>
</div>
<div class="badge" style="left:127px"><div class="bh" style="background:#22ccd4;color:#000">Ch 2</div><div class="bl"></div>
<div class="bt" style="top:25px">200 mV/div</div>
<svg class="a" style="left:6px;top:47px" width="20" height="16" viewBox="0 0 20 16"><path d="M2.2 9.5C3 4 6.5 1.5 9.7 1.5S16 4 16.4 9" fill="none" stroke="#3a3a3a" stroke-width="1.8"/><circle cx="9.5" cy="5.4" r="3.2" fill="none" stroke="#2a2a2a" stroke-width="1.5"/><ellipse cx="3.1" cy="10.8" rx="1.9" ry="3.2" fill="#d4d4d4" stroke="#666" stroke-width="1.1"/><rect x="13.9" y="8.2" width="4.6" height="6.3" fill="#e2e2e2" stroke="#555" stroke-width="1.1"/></svg>
<svg class="a" style="left:54px;top:46px" width="16" height="18" viewBox="0 0 16 18"><path d="M2 8c1-6 5-6 6 0s5 7 6 1" fill="none" stroke="#444" stroke-width="1.6"/></svg>
<div class="bt" style="top:70px">20 MHz</div>
<svg class="a" style="left:85px;top:68px" width="22" height="16" viewBox="0 0 22 16"><text x="0.5" y="10" font-family="Liberation Sans" font-weight="bold" font-size="11.5" fill="#111" textLength="7">B</text><text x="6.3" y="14" font-family="Liberation Sans" font-weight="bold" font-size="11" fill="#111" textLength="7.2" lengthAdjust="spacingAndGlyphs">w</text></svg>
</div>

<div class="sbtn" style="left:834px"><div class="sbar" style="background:#e8425c"></div><div style="position:absolute;left:0;width:100%;top:39px;font-size:22px;line-height:22px">3</div></div>
<div class="sbtn" style="left:888px"><div class="sbar" style="background:#8cd430"></div><div style="position:absolute;left:0;width:100%;top:39px;font-size:22px;line-height:22px">4</div></div>
<div class="vsep" style="left:948px"></div>
<div class="sbtn" style="left:961px"><div class="sbar" style="background:#f0901e"></div><div style="position:absolute;left:0;width:100%;top:23px;font-size:17px;line-height:19.2px">Add<br>New<br>Math</div></div>
<div class="sbtn" style="left:1015px"><div class="sbar" style="background:#b8bcc8"></div><div style="position:absolute;left:0;width:100%;top:23px;font-size:17px;line-height:19.2px">Add<br>New<br>Ref</div></div>
<div class="sbtn" style="left:1069px"><div class="sbar" style="background:#c452ea"></div><div style="position:absolute;left:0;width:100%;top:23px;font-size:17px;line-height:19.2px">Add<br>New<br>Bus</div></div>
<div class="vsep" style="left:1129px"></div>

<div class="box" style="left:1143px;width:238px"><div class="boxh">Horizontal</div><div class="boxl"></div>
<div class="bx" style="left:5px;top:23px">200 µs/div</div>
<div class="bx" style="left:132px;top:23px">2 ms</div>
<div class="bx" style="left:5px;top:46px">SR: 125 MS/s</div>
<div class="bx" style="left:132px;top:46px">8 ns/pt</div>
<div class="bx" style="left:5px;top:68px">RL: 250 kpts</div>
<svg class="a" style="left:0;top:0" width="238" height="87" viewBox="1143 979 238 87"><path d="M1275 1048.8H1286V1060H1282.4L1280.5 1063.9L1278.6 1060H1275Z" fill="#f39228"/><path d="M1276.4 1050.2H1284.6V1058.6H1276.4Z" fill="#000"/><path d="M1276.9 1051.4h7v1.7h-2.6v4.6h-1.8v-4.6h-2.6z" fill="#fff"/></svg>
<div class="bx" style="left:148px;top:68px">13.7%</div>
</div>
<div class="box" style="left:1389px;width:190px"><div class="boxh">Trigger</div><div class="boxl"></div>
<div class="a" style="left:5px;top:24px;width:36px;height:19px;border:1.3px solid #222;border-radius:6px;background:#f8f030;font-size:17px;line-height:18px;text-align:center;color:#000">1</div>
<svg class="a" style="left:50px;top:26px" width="22" height="16" viewBox="0 0 22 16"><path d="M1 14h4l8-11h5" fill="none" stroke="#5c5ca8" stroke-width="1.6"/></svg>
<div class="bx" style="left:81px;top:23px">16 mV</div>
</div>
<div class="box" style="left:1587px;width:178px"><div class="boxh">Acquisition</div><div class="boxl"></div>
<div class="bx" style="left:5px;top:23px">Auto,</div>
<div class="bx" style="left:101px;top:23px">Analyze</div>
<div class="bx" style="left:5px;top:46px">Sample: 12 bits</div>
<div class="bx" style="left:5px;top:68px">1.986 kAcqs</div>
</div>
<div class="vsep" style="left:1780px"></div>
<div class="a" style="left:1793px;top:977px;width:108px;height:43px;border-radius:7px;background:#12d200;color:#fff;font-weight:bold;font-size:16px;line-height:40px;letter-spacing:0.6px;-webkit-text-stroke:0.45px #fff;text-align:center;box-shadow:0 0 0 1px #5a5a5a">Triggered</div>
<div class="a" style="left:1792px;top:1027px;width:108px;height:36px;border-radius:6px;background:#c9c9c9;color:#000;font-size:17px;line-height:20px;text-align:center;padding-top:1px">17 Dec 2025<br>2:37:28 PM</div>
</body></html>
